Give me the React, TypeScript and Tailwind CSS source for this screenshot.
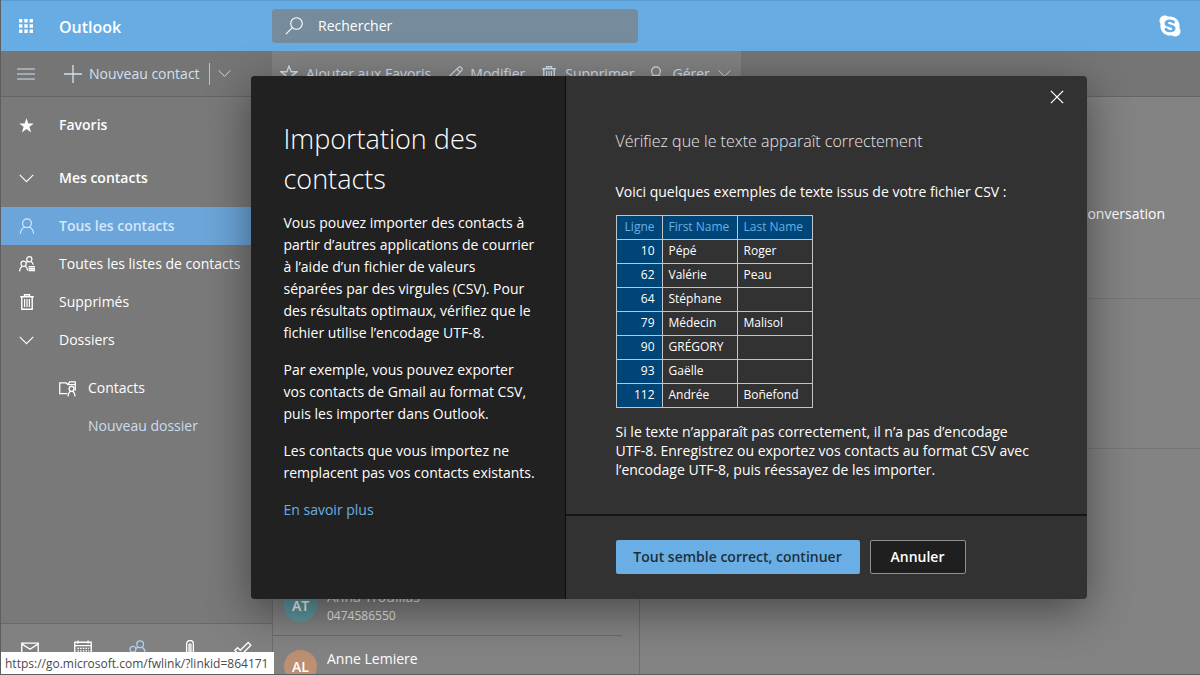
import type { ReactNode } from "react";
import { useState } from "react";
import { FaSkype } from "react-icons/fa";

type TIcon = {
  children: ReactNode;
  className?: string;
};

const Icon = ({ children, className = "size-4" }: TIcon) => (
  <svg
    viewBox="0 0 16 16"
    fill="none"
    stroke="currentColor"
    strokeWidth="1.2"
    className={`${className} shrink-0`}
    aria-hidden="true"
  >
    {children}
  </svg>
);

const ChevronDown = ({ className }: { className?: string }) => (
  <Icon className={className}>
    <path d="M.8 4.2 8 11.4l7.2-7.2" />
  </Icon>
);

const Trash = ({ className }: { className?: string }) => (
  <Icon className={className}>
    <path d="M1.2 2.8h13.6M5.5 2.8V.8h5v2M2.8 3v12.2h10.4V3" strokeWidth="1.4" />
    <path d="M5.6 5v8M8 5v8M10.4 5v8" />
  </Icon>
);

const Person = ({ className }: { className?: string }) => (
  <Icon className={className}>
    <circle cx="8" cy="5.2" r="4.4" />
    <path d="M1.3 15.8c.4-3.6 2.2-6 4.6-6.8M14.7 15.8c-.4-3.6-2.2-6-4.6-6.8" />
  </Icon>
);

const PeopleList = () => (
  <Icon className="size-4">
    <circle cx="10.3" cy="3.2" r="2.6" />
    <circle cx="4.6" cy="7.8" r="2.6" />
    <path d="M.6 15.4c.2-2.6 1.2-4.4 2.6-5.2M8.6 14.6c-.2-2.4-1-3.8-2.4-4.4M12 5.4c1.2.7 2 1.8 2.2 3.4M8.6 5.3 7.2 6.6" />
    <path d="M9.6 10.8H16M9.6 12.7H16M9.6 14.6H16" strokeWidth="1.5" />
  </Icon>
);

const FolderPerson = () => (
  <Icon className="size-[17px]">
    <path d="M7.8 12.8H.7V2.6h6l1.6 1.8h7V10M8.3 4.4 10 1.8h5.3v2.6" />
    <circle cx="11.8" cy="8.4" r="2.3" />
    <path d="M8.4 15.4c.2-2.2 1-3.8 2.2-4.8M15.2 15.4c-.2-2.2-1-3.8-2.2-4.8" />
  </Icon>
);

const navIcons = [
  {
    name: "Courrier",
    color: "text-white",
    icon: (
      <Icon className="size-[18px]">
        <path d="M.7 2.8h14.6v10.4H.7zM.7 3.4 8 8.2l7.3-4.8" />
      </Icon>
    ),
  },
  {
    name: "Calendrier",
    color: "text-white",
    icon: (
      <Icon className="size-[18px]">
        <path d="M.7 2h14.6v12.6H.7zM.7 5h14.6M3.5.4v3M12.5.4v3" />
        <path d="M3 7.5h10.4M3 9.7h10.4M3 12h10.4" strokeDasharray="1.4 1" />
      </Icon>
    ),
  },
  {
    name: "Contacts",
    color: "text-[#a9cff3]",
    icon: (
      <Icon className="size-[18px]">
        <circle cx="10.8" cy="3.8" r="3" />
        <circle cx="4.4" cy="8.2" r="2.6" />
        <path d="M.7 15c.3-2.6 1.2-3.8 2.4-4.4M8 14.4c-.2-2.2-1-3.4-2.2-4M12.6 6.4c1.4.8 2.2 2.2 2.4 4.2M9 6.2 7.2 7.4" />
      </Icon>
    ),
  },
  {
    name: "Fichiers",
    color: "text-white",
    icon: (
      <Icon className="size-[18px]">
        <path d="M5 15V3.4a3 3 0 0 1 6 0V15M7.2 15V4.2a.8.8 0 0 1 1.6 0V15" />
      </Icon>
    ),
  },
  {
    name: "Tâches",
    color: "text-white",
    icon: (
      <Icon className="size-[18px]">
        <path d="M.8 9.2 3.2 6.8 5.6 9.2l7-7L15 4.6 5.6 14z" />
      </Icon>
    ),
  },
];

const rows = [
  { line: 10, first: "Pépé", last: "Roger" },
  { line: 62, first: "Valérie", last: "Peau" },
  { line: 64, first: "Stéphane", last: "" },
  { line: 79, first: "Médecin", last: "Malisol" },
  { line: 90, first: "GRÉGORY", last: "" },
  { line: 93, first: "Gaëlle", last: "" },
  { line: 112, first: "Andrée", last: "Boñefond" },
];

const Header = () => {
  const [search, setSearch] = useState("");

  return (
    <header className="flex h-[51px] shrink-0 items-center border-t border-[#5a9bd0] bg-[#67ade4] pb-px pr-[18px] text-white">
      <button type="button" aria-label="Lanceur d'applications" className="ml-[18px]">
        <svg viewBox="0 0 14 14" fill="currentColor" className="size-[14px]">
          <path d="M0 0h3.4v3.4H0zM5.3 0h3.4v3.4H5.3zM10.6 0H14v3.4h-3.4zM0 5.3h3.4v3.4H0zM5.3 5.3h3.4v3.4H5.3zM10.6 5.3H14v3.4h-3.4zM0 10.6h3.4V14H0zM5.3 10.6h3.4V14H5.3zM10.6 10.6H14V14h-3.4z" />
        </svg>
      </button>
      <span className="ml-[26px] w-[213px] pt-0.5 text-base font-semibold">Outlook</span>
      <label className="flex h-[34px] w-[366px] items-center rounded-sm bg-[#768b9b] pl-3">
        <Icon className="size-5">
          <circle cx="10" cy="6" r="4.6" strokeWidth="0.9" />
          <path d="M6.7 9.3 1.5 14.5" strokeWidth="0.9" />
        </Icon>
        <input
          type="text"
          aria-label="Rechercher"
          placeholder="Rechercher"
          value={search}
          onChange={(e) => setSearch(e.target.value)}
          className="ml-[14px] w-full bg-transparent text-sm outline-none placeholder:text-white"
        />
      </label>
      <FaSkype className="ml-auto size-6" aria-label="Skype" />
    </header>
  );
};

const Toolbar = () => (
  <div className="flex h-[46px] shrink-0 border-b border-[#656565] bg-[#757575] text-sm text-[#d0e0f1]">
    <div className="flex w-[271px] shrink-0 items-center pl-4">
      <button type="button" aria-label="Menu">
        <Icon className="size-[18px]">
          <path d="M0 3.6h16M0 8h16M0 12.4h16" strokeWidth="0.9" />
        </Icon>
      </button>
      <button type="button" className="ml-[29px] flex items-center gap-[7px]">
        <Icon className="size-[18px]">
          <path d="M8 0v16M0 8h16" />
        </Icon>
        Nouveau contact
      </button>
      <span className="ml-[9px] mr-2 h-[22px] w-px bg-[#a9c8e6]" />
      <button type="button" aria-label="Plus d'options">
        <ChevronDown className="size-[13px]" />
      </button>
    </div>
    <div className="flex w-[469px] items-center bg-[#828282] pl-2">
      <button type="button" className="flex items-center gap-2">
        <Icon className="size-[18px]">
          <path d="m8 1 1.9 5h5.3l-4.3 3.2 1.6 5.1L8 11.2l-4.5 3.1 1.6-5.1L.8 6h5.3z" />
        </Icon>
        Ajouter aux Favoris
      </button>
      <button type="button" className="ml-4 flex items-center gap-[7px]">
        <Icon className="size-4">
          <path d="M1 15l1-4.2L11.2 1.6a1.9 1.9 0 0 1 3.2 3.2L5.2 14zM10 2.8 13.2 6" />
        </Icon>
        Modifier
      </button>
      <button type="button" className="ml-4 flex items-center gap-2">
        <Trash className="size-4" />
        Supprimer
      </button>
      <button type="button" className="ml-[14px] flex items-center gap-2">
        <Person className="size-4" />
        Gérer
        <ChevronDown className="size-[13px]" />
      </button>
    </div>
  </div>
);

const Sidebar = () => (
  <nav className="flex w-[271px] shrink-0 flex-col bg-[#797979] text-sm text-white">
    <a href="#favoris" className="flex h-[56px] items-center pl-[18px] font-semibold">
      <svg viewBox="0 0 16 16" fill="currentColor" className="mr-[25px] size-[15px]">
        <path d="m8 .2 2 5.6h5.8l-4.7 3.6 1.8 6L8 11.8l-4.9 3.6 1.8-6L.2 5.8H6z" />
      </svg>
      Favoris
    </a>
    <button type="button" className="flex h-[50px] items-center pl-[18px] font-semibold">
      <ChevronDown className="mr-[25px] size-[15px]" />
      Mes contacts
    </button>
    <a
      href="#tous"
      className="mt-1 flex h-[38px] items-center bg-[#6ca5d9] pl-[18px] font-semibold text-[#d3e8fc]"
    >
      <Person className="mr-6 size-4" />
      Tous les contacts
    </a>
    <a href="#listes" className="flex h-[38px] items-center whitespace-nowrap pl-[18px]">
      <span className="mr-6">
        <PeopleList />
      </span>
      Toutes les listes de contacts
    </a>
    <a href="#supprimes" className="flex h-[38px] items-center pl-[18px]">
      <Trash className="mr-6 size-4" />
      Supprimés
    </a>
    <button type="button" className="flex h-[38px] items-center pl-[18px]">
      <ChevronDown className="mr-[25px] size-[15px]" />
      Dossiers
    </button>
    <a href="#contacts" className="mt-[10px] flex h-[38px] items-center gap-3 pl-[58px]">
      <FolderPerson />
      Contacts
    </a>
    <a href="#nouveau" className="flex h-[38px] items-center pl-[87px] text-[#cbdcee]">
      Nouveau dossier
    </a>
    <div className="mt-auto flex h-[51px] items-center justify-between border-t border-[#686868] bg-[#818181] px-5">
      {navIcons.map((item) => (
        <button key={item.name} type="button" aria-label={item.name} className={item.color}>
          {item.icon}
        </button>
      ))}
    </div>
  </nav>
);

const ContactList = () => (
  <ul className="w-[368px] shrink-0 overflow-hidden border-x border-[#6d6d6d] pt-[477px] pr-[17px] text-sm text-white">
    <li className="flex h-[62px] gap-[10px] border-b border-[#6b6b6b] pl-[11px] pt-[15px]">
      <span className="flex size-[33px] shrink-0 items-center justify-center rounded-full bg-[#5f9ba3] font-semibold">
        AT
      </span>
      <div className="-mt-0.5 leading-[19px] text-[#ececec]">
        <p>Anna Trouillas</p>
        <p className="text-xs leading-[19px]">0474586550</p>
      </div>
    </li>
    <li className="flex h-[62px] gap-[10px] pl-[11px] pt-[14px]">
      <span className="flex size-[33px] shrink-0 items-center justify-center rounded-full bg-[#bd8f73] font-semibold">
        AL
      </span>
      <p className="leading-[18px]">Anne Lemiere</p>
    </li>
  </ul>
);

const ImportDialog = ({ onClose }: { onClose: () => void }) => (
  <div className="absolute inset-0 flex items-center justify-center pl-[136px]">
    <div
      role="dialog"
      aria-label="Importation des contacts"
      className="flex min-h-[523px] w-[836px] overflow-hidden rounded-sm bg-[#323232] text-sm text-white shadow-[0_12px_45px_rgba(0,0,0,0.45)]"
    >
      <section className="w-[315px] shrink-0 border-r border-[#0c0c0c] bg-[#212121] pl-[33px] pr-[29px] pt-[43px]">
        <h1 className="text-[27px] font-light leading-10">Importation des contacts</h1>
        <div className="mt-[13px] space-y-[15px] leading-[22px]">
          <p>
            Vous pouvez importer des contacts à partir d’autres applications de courrier à l’aide
            d’un fichier de valeurs séparées par des virgules (CSV). Pour des résultats optimaux,
            vérifiez que le fichier utilise l’encodage UTF-8.
          </p>
          <p>
            Par exemple, vous pouvez exporter vos contacts de Gmail au format CSV, puis les importer
            dans Outlook.
          </p>
          <p>Les contacts que vous importez ne remplacent pas vos contacts existants.</p>
          <p>
            <a href="https://go.microsoft.com/fwlink/?linkid=864171" className="text-[#69afe5]">
              En savoir plus
            </a>
          </p>
        </div>
      </section>
      <section className="flex flex-1 flex-col">
        <div className="flex h-[43px] justify-end pr-[23px] pt-[14px]">
          <button type="button" aria-label="Fermer" onClick={onClose} className="h-[14px]">
            <Icon className="size-[14px]">
              <path d="m1 1 14 14M15 1 1 15" strokeWidth="1.6" />
            </Icon>
          </button>
        </div>
        <div className="px-[50px]">
          <h2 className="mt-[10px] text-base font-light leading-6 text-[#e6e6e6]">
            Vérifiez que le texte apparaît correctement
          </h2>
          <p className="mt-7 leading-[22px]">
            Voici quelques exemples de texte issus de votre fichier CSV :
          </p>
          <table className="mt-3 w-[196px] table-fixed border-collapse text-xs">
            <thead>
              <tr className="h-6 bg-[#004578] text-[#69afe5]">
                <th className="w-[46px] border border-[#c4c4c4] px-[7px] text-right font-normal">
                  Ligne
                </th>
                <th className="w-[75px] whitespace-nowrap border border-[#c4c4c4] px-1.5 text-left font-normal">
                  First Name
                </th>
                <th className="w-[75px] whitespace-nowrap border border-[#c4c4c4] px-1.5 text-left font-normal">
                  Last Name
                </th>
              </tr>
            </thead>
            <tbody>
              {rows.map((row) => (
                <tr key={row.line} className="h-6">
                  <td className="border border-[#c4c4c4] bg-[#004578] px-[7px] text-right">
                    {row.line}
                  </td>
                  <td className="border border-[#c4c4c4] px-1.5">{row.first}</td>
                  <td className="border border-[#c4c4c4] px-1.5">{row.last}</td>
                </tr>
              ))}
            </tbody>
          </table>
          <p className="mt-[14px] leading-[19px]">
            Si le texte n’apparaît pas correctement, il n’a pas d’encodage UTF-8. Enregistrez ou
            exportez vos contacts au format CSV avec l’encodage UTF-8, puis réessayez de les
            importer.
          </p>
        </div>
        <div className="mt-auto flex h-[85px] gap-[10px] border-t-2 border-[#151515] px-[50px] pt-6 font-semibold">
          <button
            type="button"
            className="h-[34px] w-[244px] rounded-xs bg-[#69afe5] text-[#212f3b]"
          >
            Tout semble correct, continuer
          </button>
          <button
            type="button"
            onClick={onClose}
            className="h-[34px] w-24 rounded-xs border border-[#909090] bg-[#1f1f1f]"
          >
            Annuler
          </button>
        </div>
      </section>
    </div>
  </div>
);

const App = () => {
  const [open, setOpen] = useState(true);

  return (
    <div className="relative flex h-screen w-full flex-col overflow-hidden border-b border-l border-[#5c5f62] bg-[#838383] font-['Open_Sans','Noto_Sans',sans-serif]">
      <Header />
      <Toolbar />
      <main className="flex min-h-0 flex-1">
        <Sidebar />
        <ContactList />
        <section className="flex-1 text-sm text-white">
          <div className="flex h-[202px] items-center justify-end border-b border-[#767676] pr-[35px] pt-8">
            <a href="#conversation">Démarrer une conversation</a>
          </div>
          <div className="h-[150px] border-b border-[#767676]" />
        </section>
      </main>
      {open && <ImportDialog onClose={() => setOpen(false)} />}
      <div className="absolute bottom-0 left-0 flex h-[22px] w-[273px] items-center whitespace-nowrap bg-white pl-1 pt-0.5 text-xs text-[#4a4a4a]">
        https://go.microsoft.com/fwlink/?linkid=864171
      </div>
    </div>
  );
};

export default App;
